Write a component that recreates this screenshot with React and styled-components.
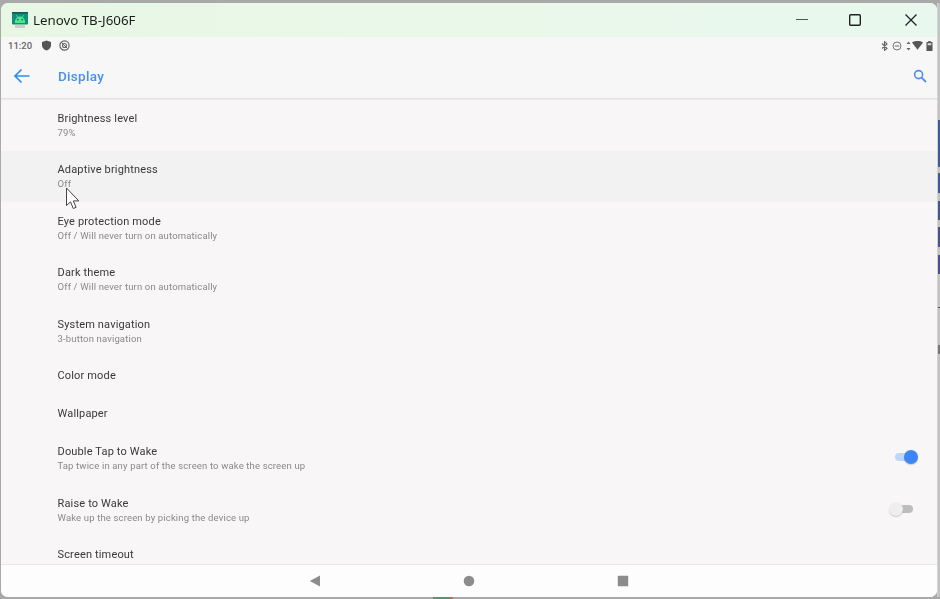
import React from 'react';
import styled, { createGlobalStyle } from 'styled-components';

const GlobalStyle = createGlobalStyle`
  html, body {
    margin: 0;
    padding: 0;
    width: 940px;
    height: 599px;
    overflow: hidden;
    background: #b4b4b4;
  }
  * { box-sizing: border-box; }
`;

const Desktop = styled.div`
  position: relative;
  width: 940px;
  height: 599px;
  padding: 3px 0 2px 1px;
  display: flex;
  background: #a9a9a9;
`;

const Win = styled.div`
  position: relative;
  width: 936px;
  height: 594px;
  display: flex;
  flex-direction: column;
  overflow: hidden;
  border-radius: 7px;
  background: #f8f6f7;
  font-family: Roboto, "Liberation Sans", sans-serif;
  filter: blur(0.3px);
`;

const Strip = styled.div`
  width: 3px;
  border-left: 1px solid #d4d4d4;
  display: flex;
  flex-direction: column;
  background: #c3c3c3;
`;

const StripPart = styled.div`
  height: ${(p) => p.$h}px;
  background: ${(p) => p.$c || 'transparent'};
`;

const BottomPeek = styled.div`
  position: absolute;
  left: ${(p) => p.$x}px;
  bottom: 0;
  width: ${(p) => p.$w}px;
  height: 2px;
  background: ${(p) => p.$c};
`;

const TitleBar = styled.div`
  height: 34px;
  flex-shrink: 0;
  display: flex;
  align-items: center;
  padding-left: 11px;
  background: linear-gradient(90deg, #e7f7e4 0%, #eaf8e9 50%, #e8f8ee 100%);
`;

const TitleText = styled.div`
  margin-left: 5px;
  font-family: "Noto Sans", "Open Sans", sans-serif;
  font-size: 13.3px;
  color: #1d1d1d;
  flex: 1;
`;

const WinButton = styled.div`
  width: 52px;
  height: 34px;
  margin-right: ${(p) => p.$after || 0}px;
  display: flex;
  align-items: center;
  justify-content: center;
`;

const StatusBar = styled.div`
  height: 17px;
  flex-shrink: 0;
  display: flex;
  align-items: center;
  padding: 0 4px 0 7px;
  background: #f7f7f7;
  color: #666;
`;

const Clock = styled.span`
  font-size: 9.5px;
  font-weight: 500;
  color: #666;
  margin-right: 9px;
`;

const StatusGap = styled.div`
  flex: 1;
`;

const AppBar = styled.div`
  height: 45px;
  flex-shrink: 0;
  display: flex;
  align-items: center;
  padding: 0 10px 0 12px;
  background: #f7f7f7;
  border-bottom: 1px solid #e2e2e2;
  box-shadow: 0 1px 1px rgba(0, 0, 0, 0.04);
  position: relative;
  z-index: 1;
`;

const PageTitle = styled.div`
  margin-left: 27px;
  font-size: 13.5px;
  font-weight: 500;
  letter-spacing: 0.3px;
  color: #4a8fe8;
  flex: 1;
`;

const List = styled.div`
  flex: 1;
  min-height: 0;
  overflow: hidden;
`;

const Row = styled.div`
  height: ${(p) => (p.$single ? 38 : 51.5)}px;
  flex-shrink: 0;
  display: flex;
  align-items: center;
  padding: ${(p) => (p.$single ? 0 : 1)}px 21px 0 56.5px;
  background: ${(p) => (p.$active ? '#f3f2f2' : 'transparent')};
`;

const RowText = styled.div`
  flex: 1;
  display: flex;
  flex-direction: column;
  gap: 2px;
`;

const RowTitle = styled.div`
  font-size: 11px;
  line-height: 13px;
  letter-spacing: 0.16px;
  color: #3a383a;
`;

const RowSub = styled.div`
  font-size: 9.5px;
  line-height: 12px;
  letter-spacing: 0.15px;
  color: #8a8889;
`;

const Switch = styled.div`
  position: relative;
  width: ${(p) => (p.$on ? 21 : 20)}px;
  height: 8px;
  margin-top: -3px;
  margin-right: ${(p) => (p.$on ? '0' : '3px')};
  border-radius: 4px;
  background: ${(p) => (p.$on ? '#bfd6fb' : '#bdbdbd')};
`;

const Knob = styled.div`
  position: absolute;
  top: -3px;
  left: ${(p) => (p.$on ? '9px' : '-4px')};
  width: 14px;
  height: 14px;
  border-radius: 50%;
  background: ${(p) => (p.$on ? '#3c87f5' : '#eeeeee')};
  box-shadow: 0 1px 1px rgba(0, 0, 0, 0.18);
`;

const NavBar = styled.div`
  height: 33px;
  flex-shrink: 0;
  display: flex;
  align-items: center;
  justify-content: center;
  gap: 142px;
  background: #fdfdfd;
  border-top: 1.5px solid #e8e6e6;
`;

const Pointer = styled.svg`
  position: absolute;
  left: 64px;
  top: 184px;
`;

const rows = [
  { title: 'Brightness level', sub: '79%' },
  { title: 'Adaptive brightness', sub: 'Off', active: true },
  { title: 'Eye protection mode', sub: 'Off / Will never turn on automatically' },
  { title: 'Dark theme', sub: 'Off / Will never turn on automatically' },
  { title: 'System navigation', sub: '3-button navigation' },
  { title: 'Color mode' },
  { title: 'Wallpaper' },
  { title: 'Double Tap to Wake', sub: 'Tap twice in any part of the screen to wake the screen up', toggle: 'on' },
  { title: 'Raise to Wake', sub: 'Wake up the screen by picking the device up', toggle: 'off' },
  { title: 'Screen timeout', sub: 'After 5 minutes of inactivity' },
];

const AndroidIcon = () => (
  <svg width="16" height="17" viewBox="0 0 16 17">
    <rect x="0" y="0" width="16" height="12.5" rx="1" fill="#0e8f78" />
    <rect x="0" y="0" width="16" height="1.5" fill="#0b5b55" />
    <path d="M4.3 3.2l1.4 2M11.7 3.2l-1.4 2" stroke="#52e58c" strokeWidth="0.9" />
    <path d="M3 9.5a5 5 0 0 1 10 0v1.5H3z" fill="#52e58c" />
    <circle cx="5.8" cy="7.6" r="0.9" fill="#0e7a60" />
    <circle cx="10.2" cy="7.6" r="0.9" fill="#0e7a60" />
    <rect x="3" y="13" width="10" height="3" rx="0.5" fill="#c9cdcb" />
  </svg>
);

const App = () => {
  return (
    <>
      <GlobalStyle />
      <Desktop>
        <Win>
          <TitleBar>
            <AndroidIcon />
            <TitleText>Lenovo TB-J606F</TitleText>
            <WinButton $after={1.5}>
              <svg width="14" height="14" viewBox="0 0 14 14">
                <path d="M1 6.5h12" stroke="#555" strokeWidth="1" fill="none" />
              </svg>
            </WinButton>
            <WinButton $after={4}>
              <svg width="14" height="14" viewBox="0 0 14 14">
                <rect x="1.7" y="1.7" width="10.6" height="10.6" rx="1" stroke="#222" strokeWidth="1.4" fill="none" />
              </svg>
            </WinButton>
            <WinButton>
              <svg width="14" height="14" viewBox="0 0 14 14">
                <path d="M1.5 1.5l11 11M12.5 1.5l-11 11" stroke="#222" strokeWidth="1.3" fill="none" />
              </svg>
            </WinButton>
          </TitleBar>

          <StatusBar>
            <Clock>11:20</Clock>
            <svg width="11" height="11" viewBox="0 0 11 11">
              <path d="M5.5 0.5l4.5 1.6v3.2c0 2.6-1.9 4.4-4.5 5.2C2.9 9.7 1 7.9 1 5.3V2.1z" fill="#555" />
            </svg>
            <svg width="11" height="11" viewBox="0 0 11 11" style={{ marginLeft: 7 }}>
              <circle cx="5.5" cy="5.5" r="4.6" stroke="#666" strokeWidth="1.2" fill="none" />
              <circle cx="5.5" cy="5.5" r="2" stroke="#666" strokeWidth="1.1" fill="none" />
              <path d="M2.5 2.5l6 6" stroke="#666" strokeWidth="1" />
            </svg>
            <StatusGap />
            <svg width="9" height="10" viewBox="0 0 9 10">
              <path d="M2 2.5l5 5-2.5 2v-9L7 3 2 7.5" stroke="#666" strokeWidth="1.1" fill="none" />
            </svg>
            <svg width="10" height="10" viewBox="0 0 10 10" style={{ marginLeft: 3 }}>
              <circle cx="5" cy="5" r="4" stroke="#777" strokeWidth="1" fill="none" />
              <path d="M2.8 5h4.4" stroke="#777" strokeWidth="1.1" />
            </svg>
            <svg width="5" height="10" viewBox="0 0 5 10" style={{ marginLeft: 3.5 }}>
              <path d="M2.5 0.5L4.5 3h-4zM2.5 9.5L0.5 7h4z" fill="#666" />
            </svg>
            <svg width="11" height="9" viewBox="0 0 11 9" style={{ marginLeft: 1 }}>
              <path d="M0 1.5C3.2-.4 7.8-.4 11 1.5L5.5 8.8z" fill="#555" />
            </svg>
            <svg width="7" height="10" viewBox="0 0 7 10" style={{ marginLeft: 3.5 }}>
              <path d="M2.3 0h2.4v1H6.5v9h-6V1h1.8z" fill="#555" />
              <rect x="1.7" y="2.2" width="3.6" height="2" fill="#ddd" />
            </svg>
          </StatusBar>

          <AppBar>
            <svg width="18" height="18" viewBox="0 0 18 18">
              <path d="M16.5 9H2M8.5 2.5L2 9l6.5 6.5" stroke="#2b8ff0" strokeWidth="1.7" fill="none" />
            </svg>
            <PageTitle>Display</PageTitle>
            <svg width="14" height="14" viewBox="0 0 14 14">
              <circle cx="5.6" cy="5.6" r="4" stroke="#4a90e8" strokeWidth="1.6" fill="none" />
              <path d="M8.6 8.6l4.4 4.4" stroke="#4a90e8" strokeWidth="1.8" />
            </svg>
          </AppBar>

          <List>
            {rows.map((row) => (
              <Row key={row.title} $single={!row.sub} $active={row.active}>
                <RowText>
                  <RowTitle>{row.title}</RowTitle>
                  {row.sub && <RowSub>{row.sub}</RowSub>}
                </RowText>
                {row.toggle && (
                  <Switch $on={row.toggle === 'on'}>
                    <Knob $on={row.toggle === 'on'} />
                  </Switch>
                )}
              </Row>
            ))}
          </List>

          <NavBar>
            <svg width="12" height="12" viewBox="0 0 12 12">
              <path d="M11 0.5v11L0.8 6z" fill="#8c8c8c" />
            </svg>
            <svg width="12" height="12" viewBox="0 0 12 12">
              <circle cx="6" cy="6" r="5.3" fill="#8c8c8c" />
            </svg>
            <svg width="12" height="12" viewBox="0 0 12 12">
              <rect x="0.8" y="0.8" width="10.4" height="10.4" rx="0.5" fill="#8c8c8c" />
            </svg>
          </NavBar>

          <Pointer width="16" height="24" viewBox="0 0 16 24">
            <path d="M1.5 1v17.5l4-3.6 2.8 6.6 2.8-1.2-2.8-6.4h5.5z" fill="#fff" stroke="#444" strokeWidth="1" />
          </Pointer>
        </Win>
        <Strip>
          <StripPart $h={117} />
          <StripPart $h={47} $c="#3f5b94" />
          <StripPart $h={6} />
          <StripPart $h={20} $c="#3f5a94" />
          <StripPart $h={8} />
          <StripPart $h={19} $c="#45558f" />
          <StripPart $h={7} />
          <StripPart $h={20} $c="#4a4f8e" />
          <StripPart $h={8} />
          <StripPart $h={19} $c="#4a4f8e" />
          <StripPart $h={33} />
          <StripPart $h={1} $c="#555" />
          <StripPart $h={37} />
          <StripPart $h={9} $c="#777" />
        </Strip>
        <BottomPeek $x={433} $w={17} $c="#5f9070" />
        <BottomPeek $x={450} $w={3} $c="#b5705a" />
      </Desktop>
    </>
  );
};

export default App;
